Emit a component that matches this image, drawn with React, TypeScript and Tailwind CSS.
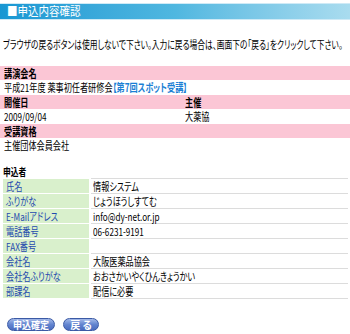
import React from "react";

const rows: [string, string][] = [
  ["氏名", "情報システム"],
  ["ふりがな", "じょうほうしすてむ"],
  ["E-Mailアドレス", "info@dy-net.or.jp"],
  ["電話番号", "06-6231-9191"],
  ["FAX番号", ""],
  ["会社名", "大阪医薬品協会"],
  ["会社名ふりがな", "おおさかいやくひんきょうかい"],
  ["部課名", "配信に必要"],
];

function T({ children, className = "" }: { children?: React.ReactNode; className?: string }) {
  return (
    <span className={"inline-block origin-left scale-x-[0.74] whitespace-nowrap " + className}>{children}</span>
  );
}

export default function App() {
  return (
    <div
      className="w-[350px] h-[334px] bg-white text-black overflow-hidden [font-feature-settings:'palt'] text-[11px] leading-none"
      style={{ fontFamily: '"Noto Sans CJK JP", "Noto Sans", sans-serif' }}
    >
      <div className="mt-[3px] h-[17px] flex items-center pl-[7px] bg-gradient-to-r from-[#1797d3] via-[#4fb7e0] to-[#a9dcef] border-y border-[#cfeaf6] text-white text-[12.5px]">
        <span className="inline-block origin-left scale-x-[0.84] whitespace-nowrap">■申込内容確認</span>
      </div>
      <div className="mt-[19px] pl-[3px] h-[11px] flex items-center whitespace-nowrap">
        <span className="inline-block origin-left scale-x-[0.705] whitespace-nowrap">
          ブラウザの戻るボタンは使用しないで下さい。入力に戻る場合は、画面下の「戻る」をクリックして下さい。
        </span>
      </div>
      <div className="mt-[16px]">
        <div className="h-[14px] bg-[#fbc6d5] flex items-center pl-[4px] font-bold"><T>講演会名</T></div>
        <div className="h-[15px] flex items-center pl-[4px]">
          <T>
            平成21年度 薬事初任者研修会<span className="text-[#1b80d4] font-bold">【第7回スポット受講】</span>
          </T>
        </div>
        <div className="h-[14px] bg-[#fbc6d5] flex items-center font-bold">
          <div className="w-[185px] pl-[4px]"><T>開催日</T></div>
          <div><T>主催</T></div>
        </div>
        <div className="h-[15px] flex items-center">
          <div className="w-[185px] pl-[4px]"><T>2009/09/04</T></div>
          <div><T>大薬協</T></div>
        </div>
        <div className="h-[14px] bg-[#fbc6d5] flex items-center pl-[4px] font-bold"><T>受講資格</T></div>
        <div className="h-[15px] flex items-center pl-[4px]"><T>主催団体会員会社</T></div>
      </div>
      <div className="mt-[14px] pl-[3px] h-[10px] flex items-center font-bold text-[10.5px]"><T>申込者</T></div>
      <div className="mt-[1px] ml-[3px] w-[345px] flex flex-col">
        {rows.map(([k, v]) => (
          <div key={k} className="flex h-[15px]">
            <div className="w-[86px] bg-[#d9f0cc] border-t border-white text-[#1f4aae] flex items-center pl-[3px]">
              <T>{k}</T>
            </div>
            <div className="ml-[2px] flex-1 border-t border-[#dcdcdc] flex items-center pl-[2px]">
              <T>{v}</T>
            </div>
          </div>
        ))}
        <div className="ml-[88px] border-t border-[#dcdcdc]" />
      </div>
      <div className="mt-[19px] ml-[7px] flex gap-[8px]">
        <button className="h-[13px] w-[48px] rounded-full bg-gradient-to-b from-[#a3b9e8] via-[#6384cf] to-[#4a6cbf] border border-[#3b5aa5] text-white font-bold text-[10px] flex items-center justify-center leading-none">
          <span className="inline-block scale-x-[0.9] whitespace-nowrap">申込確定</span>
        </button>
        <button className="h-[13px] w-[36px] rounded-full bg-gradient-to-b from-[#a3b9e8] via-[#6384cf] to-[#4a6cbf] border border-[#3b5aa5] text-white font-bold text-[10px] flex items-center justify-center leading-none">
          <span className="inline-block whitespace-nowrap">戻 る</span>
        </button>
      </div>
    </div>
  );
}
